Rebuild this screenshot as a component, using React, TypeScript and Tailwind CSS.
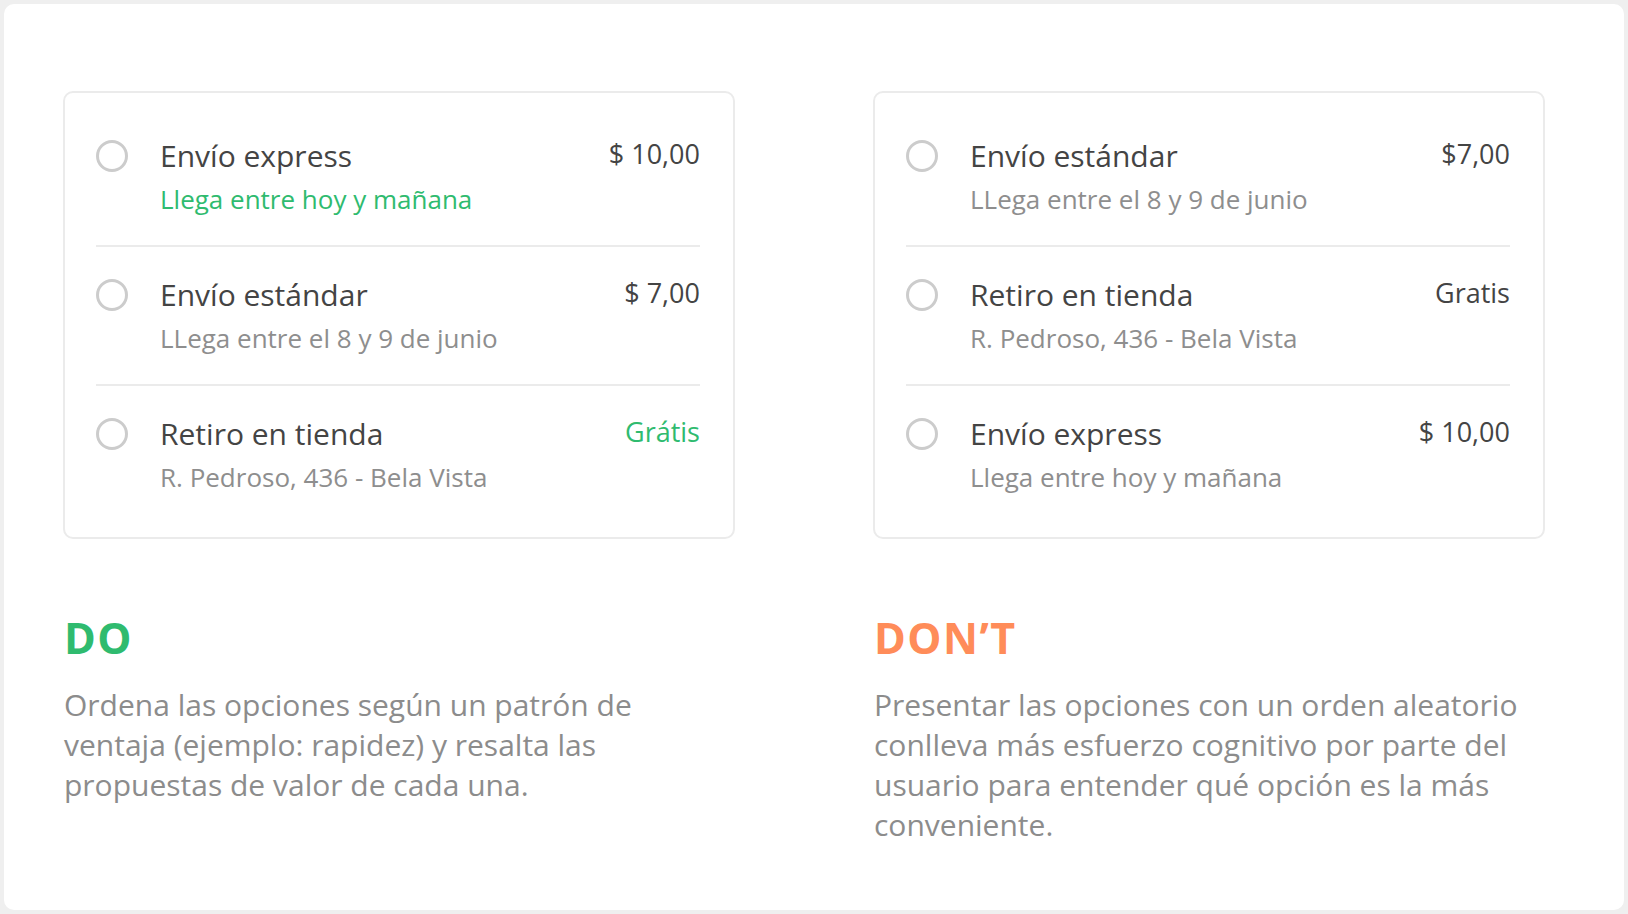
import React from "react";

type Option = {
  key: string;
  title: string;
  detail: string;
  price: string;
  detailGreen?: boolean;
  priceGreen?: boolean;
};

const doOptions: Option[] = [
  { key: "express", title: "Envío express", detail: "Llega entre hoy y mañana", price: "$ 10,00", detailGreen: true },
  { key: "standard", title: "Envío estándar", detail: "LLega entre el 8 y 9 de junio", price: "$ 7,00" },
  { key: "store", title: "Retiro en tienda", detail: "R. Pedroso, 436 - Bela Vista", price: "Grátis", priceGreen: true },
];

const dontOptions: Option[] = [
  { key: "standard", title: "Envío estándar", detail: "LLega entre el 8 y 9 de junio", price: "$7,00" },
  { key: "store", title: "Retiro en tienda", detail: "R. Pedroso, 436 - Bela Vista", price: "Gratis" },
  { key: "express", title: "Envío express", detail: "Llega entre hoy y mañana", price: "$ 10,00" },
];

function OptionCard({ options }: { options: Option[] }) {
  return (
    <div className="rounded-[10px] border-2 border-[#ebebeb] pl-[31px] pr-[33px] pt-[15px] pb-[14px]">
      {options.map((opt, i) => (
        <div
          key={opt.key}
          className={
            "flex items-start pt-[28px] pb-[26px] " + (i < options.length - 1 ? "border-b-2 border-[#ebebeb]" : "")
          }
        >
          <div className="mt-[4px] h-[32px] w-[32px] shrink-0 rounded-full border-[3px] border-[#cccccc]" />
          <div className="ml-[32px] flex-1">
            <div className="text-[30px] leading-[40px] text-[#444444]">{opt.title}</div>
            <div
              className={
                "mt-[3px] text-[26px] leading-[40px] " + (opt.detailGreen ? "text-[#2fbb6f]" : "text-[#8e8e8e]")
              }
            >
              {opt.detail}
            </div>
          </div>
          <div
            className={
              "text-[27px] leading-[36px] " + (opt.priceGreen ? "text-[#2fbb6f]" : "text-[#444444]")
            }
          >
            {opt.price}
          </div>
        </div>
      ))}
    </div>
  );
}

function Column({
  options,
  heading,
  headingClass,
  lines,
}: {
  options: Option[];
  heading: string;
  headingClass: string;
  lines: string[];
}) {
  return (
    <div className="flex w-[672px] flex-col">
      <OptionCard options={options} />
      <div
        className={
          "ml-[1px] mt-[75px] text-[43px] font-bold leading-[48px] tracking-[1.5px] " + headingClass
        }
      >
        {heading}
      </div>
      <p className="ml-[1px] mt-[23px] text-[30px] leading-[40px] text-[#8c8c8c]">
        {lines.map((l, i) => (
          <span key={i} className="block whitespace-nowrap">
            {l}
          </span>
        ))}
      </p>
    </div>
  );
}

export default function App() {
  return (
    <div
      className="h-[914px] w-[1628px] bg-[#efefef] p-[4px]"
      style={{ fontFamily: "'Open Sans', Lato, sans-serif" }}
    >
      <div className="flex h-full gap-[138px] rounded-[10px] bg-white pl-[59px] pt-[87px]">
        <Column
          options={doOptions}
          heading="DO"
          headingClass="text-[#2fbb6f]"
          lines={[
            "Ordena las opciones según un patrón de",
            "ventaja (ejemplo: rapidez) y resalta las",
            "propuestas de valor de cada una.",
          ]}
        />
        <Column
          options={dontOptions}
          heading="DON’T"
          headingClass="text-[#ff8c59]"
          lines={[
            "Presentar las opciones con un orden aleatorio",
            "conlleva más esfuerzo cognitivo por parte del",
            "usuario para entender qué opción es la más",
            "conveniente.",
          ]}
        />
      </div>
    </div>
  );
}
